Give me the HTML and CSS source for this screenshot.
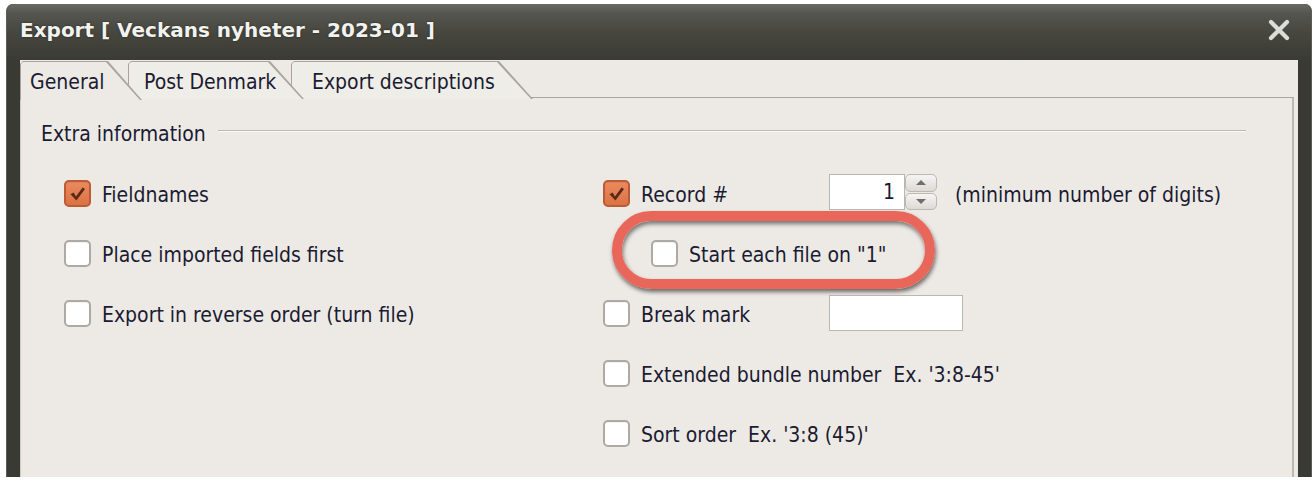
FILE: index.html
```html
<!DOCTYPE html>
<html>
<head>
<meta charset="utf-8">
<link rel="stylesheet" href="styles.css">
</head>
<body>
<div class="window">
  <div class="titlebar">
    <span class="title">Export [ Veckans nyheter - 2023-01 ]</span>
    <svg class="close" width="22" height="22" viewBox="0 0 22 22"><path d="M3 3 L19 19 M19 3 L3 19" stroke="#dcdcd8" stroke-width="4.2" stroke-linecap="round"/></svg>
  </div>
  <div class="client">
    <div class="tabs">
      <div class="tab tab-active tab-general"><div class="tab-in">General</div></div>
      <div class="tab tab-pd"><div class="tab-in">Post Denmark</div></div>
      <div class="tab tab-ed"><div class="tab-in">Export descriptions</div></div>
    </div>
    <div class="panel">
      <div class="legend"><span>Extra information</span><span class="legend-line"></span></div>
      <div class="cols">
        <div class="col col-left">
          <div class="row"><span class="cb checked"><svg width="27" height="27" viewBox="0 0 27 27"><path d="M6.5 14.2 L9.6 12.6 L12 16.4 L18.6 7.6 L21 9 L12.4 20.6 Z" fill="#5a2a14"/></svg></span><span class="label">Fieldnames</span></div>
          <div class="row"><span class="cb"></span><span class="label">Place imported fields first</span></div>
          <div class="row"><span class="cb"></span><span class="label">Export in reverse order (turn file)</span></div>
        </div>
        <div class="col col-right">
          <div class="row"><span class="cb checked"><svg width="27" height="27" viewBox="0 0 27 27"><path d="M6.5 14.2 L9.6 12.6 L12 16.4 L18.6 7.6 L21 9 L12.4 20.6 Z" fill="#5a2a14"/></svg></span><span class="label fixed">Record #</span>
            <span class="spin"><span class="spin-input">1</span><span class="spin-btns"><span class="spin-btn"><svg width="12" height="7" viewBox="0 0 12 7"><path d="M1 6 L6 1 L11 6 Z" fill="#6e6e6e"/></svg></span><span class="spin-btn"><svg width="12" height="7" viewBox="0 0 12 7"><path d="M1 1 L6 6 L11 1 Z" fill="#6e6e6e"/></svg></span></span></span>
            <span class="label hint">(minimum number of digits)</span>
          </div>
          <div class="row row-indent"><span class="ring"></span><span class="cb"></span><span class="label">Start each file on "1"</span></div>
          <div class="row"><span class="cb"></span><span class="label fixed">Break mark</span><span class="textbox"></span></div>
          <div class="row"><span class="cb"></span><span class="label">Extended bundle number&nbsp; Ex. '3:8-45'</span></div>
          <div class="row"><span class="cb"></span><span class="label">Sort order&nbsp; Ex. '3:8 (45)'</span></div>
        </div>
      </div>
    </div>
  </div>
</div>
</body>
</html>
```

FILE: styles.css
```css
* { box-sizing: border-box; }
html, body { margin: 0; padding: 0; background: #ffffff; }
body {
  width: 1316px;
  height: 484px;
  overflow: hidden;
  font-family: "DejaVu Sans Condensed", "DejaVu Sans", sans-serif;
  font-stretch: condensed;
  font-size: 21px;
  color: #1b1b32;
}
.window {
  margin: 4px 0 0 6px;
  width: 1306px;
  height: 473px;
  background: #3a3a34;
  border-radius: 7px 7px 0 0;
  border-left: 1px solid #5c5c56;
  border-right: 1px solid #5c5c56;
  display: flex;
  flex-direction: column;
}
.titlebar {
  height: 56px;
  flex: none;
  display: flex;
  align-items: center;
  justify-content: space-between;
  padding: 0 21px 4px 13px;
  background: linear-gradient(#6a6a64 0px, #55554f 10px, #46463f 30px, #3b3b35 56px);
  border-radius: 7px 7px 0 0;
}
.title {
  font-family: "DejaVu Sans", sans-serif;
  font-stretch: normal;
  font-weight: bold;
  font-size: 20px;
  color: #f2f2ee;
  text-shadow: 0 0 2px rgba(0,0,0,0.6);
}
.close { display: block; }
.client {
  flex: 1;
  margin: 0 13px;
  background: #edeae5;
  display: flex;
  flex-direction: column;
}
.tabs {
  height: 38px;
  flex: none;
  display: flex;
  padding-top: 1px;
  position: relative;
  z-index: 2;
  margin-bottom: -1px;
}
.tab {
  height: 38px;
  background: #a9a59e;
  clip-path: polygon(0 3px, 3px 0, calc(100% - 34px) 0, 100% 100%, 0 100%);
  position: relative;
}
.tab-in {
  height: 37px;
  margin: 1px 2px 0 1px;
  background: #efede8;
  clip-path: polygon(0 2px, 2px 0, calc(100% - 34px) 0, 100% 100%, 0 100%);
  padding-top: 8px;
  white-space: nowrap;
}
.tab-active .tab-in { height: 38px; background: #edeae5; }
.tab-active { height: 39px; }
.tab-general { width: 122px; z-index: 3; }
.tab-general .tab-in { padding-left: 9px; }
.tab-pd { width: 176px; margin-left: -14px; z-index: 2; }
.tab-pd .tab-in { padding-left: 15px; }
.tab-ed { width: 242px; margin-left: -13px; z-index: 1; }
.tab-ed .tab-in { padding-left: 20px; }
.panel {
  flex: 1;
  border-top: 1px solid #aaa69e;
  border-left: 1px solid #cfcbc4;
  border-right: 2px solid #bdb9b2;
  margin-right: 4px;
  padding: 18px 46px 0 20px;
}
.legend {
  display: flex;
  align-items: center;
  gap: 12px;
  height: 32px;
}
.legend > span:first-child { padding-top: 3px; }
.legend-line {
  flex: 1;
  height: 2px;
  border-top: 1px solid #bcb8b0;
  border-bottom: 1px solid #fbfaf8;
  margin-top: -3px;
}
.cols {
  display: grid;
  grid-template-columns: 539px 1fr;
  margin: 15px 0 0 23px;
}
.row {
  height: 60px;
  display: flex;
  align-items: center;
  position: relative;
}
.row-indent { padding-left: 48px; }
.cb {
  width: 27px;
  height: 27px;
  flex: none;
  border: 2px solid #aeaaa3;
  border-radius: 5px;
  background: #ffffff;
  margin-right: 11px;
  box-shadow: inset 0 1px 1px rgba(0,0,0,0.06);
  position: relative;
}
.cb svg { position: absolute; left: -2px; top: -2px; }
.cb.checked {
  background: linear-gradient(#ea8a60, #dc7246);
  border-color: #bb5c35;
}
.label { white-space: nowrap; padding-top: 4px; }
.fixed { width: 188px; }
.spin { display: flex; height: 36px; margin-top: -2px; }
.spin-input {
  width: 76px;
  height: 36px;
  background: #fff;
  border: 1px solid #bab6b0;
  text-align: right;
  padding: 5px 9px 0 0;
}
.spin-btns { display: flex; flex-direction: column; width: 32px; gap: 1px; }
.spin-btn {
  flex: 1;
  display: flex;
  align-items: center;
  justify-content: center;
  background: linear-gradient(#f6f5f3, #dddad5);
  border: 1px solid #bcb8b2;
  border-radius: 5px;
}
.hint { margin-left: 18px; }
.textbox {
  width: 134px;
  height: 36px;
  background: #fff;
  border: 1px solid #bab6b0;
}
.ring {
  position: absolute;
  left: 9px;
  top: -12px;
  width: 323px;
  height: 78px;
  border: 10px solid #e9665a;
  border-radius: 40px;
  box-shadow: 1px 3px 4px rgba(0,0,0,0.55), inset 1px 3px 4px rgba(0,0,0,0.5);
}
```
